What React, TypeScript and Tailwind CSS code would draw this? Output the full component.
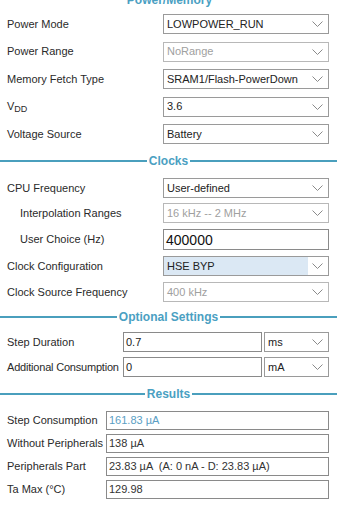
import React from 'react';

const Chevron = () => (
  <svg width="11" height="6" viewBox="0 0 11 6" className="shrink-0">
    <polyline points="0.5,0.5 5.5,5.5 10.5,0.5" fill="none" stroke="#8a8a8a" strokeWidth="1" />
  </svg>
);

const Select = ({ value, disabled = false, highlight = false }: { value: string; disabled?: boolean; highlight?: boolean }) => (
  <div
    className={`flex h-full items-stretch border ${disabled ? 'border-[#b8b8b8] text-[#a0a0a0]' : 'border-[#9a9a9a] text-[#222]'}`}
  >
    <div className={`flex flex-1 items-center whitespace-nowrap pl-[3px] ${highlight ? 'bg-[#dbe8f4]' : 'bg-white'}`}>{value}</div>
    <div className="flex w-[20px] items-center justify-center bg-white pr-[2px]">
      <Chevron />
    </div>
  </div>
);

const Divider = ({ title }: { title: string }) => (
  <div className="flex h-[14px] items-center">
    <div className="h-[2px] flex-1 bg-[#4a9fbd]" />
    <span className="px-[2px] text-[12px] font-bold leading-none text-[#4aa0c2]">{title}</span>
    <div className="mr-[2px] h-[2px] flex-1 bg-[#4a9fbd]" />
  </div>
);

const Row = ({ label, children, indent = false, h = 20, mt = 0 }: { label: React.ReactNode; children: React.ReactNode; indent?: boolean; h?: number; mt?: number }) => (
  <div className="flex items-center" style={{ height: h, marginTop: mt }}>
    <div className={`w-[163px] shrink-0 whitespace-nowrap text-[#2a2a2a] ${indent ? 'pl-[20px]' : 'pl-[7px]'}`}>{label}</div>
    <div className="mr-[10px] h-full flex-1">{children}</div>
  </div>
);

const ResultRow = ({ label, value, blue = false, mt }: { label: string; value: string; blue?: boolean; mt: number }) => (
  <div className="flex h-[19px] items-center" style={{ marginTop: mt }}>
    <div className="w-[106px] shrink-0 whitespace-nowrap pl-[7px] text-[#2a2a2a]">{label}</div>
    <div className={`mr-[10px] flex h-full flex-1 items-center whitespace-pre border border-[#8a8a8a] pl-[2px] ${blue ? 'text-[#5a9ec4]' : 'text-[#333]'}`}>
      {value}
    </div>
  </div>
);

export default function App() {
  return (
    <div className="h-[511px] w-[339px] overflow-hidden bg-white text-[11px] leading-none" style={{ fontFamily: '"Liberation Sans", Arial, sans-serif' }}>
      <div className="-mt-[7px] flex h-[14px] justify-center">
        <span className="text-[12px] font-bold leading-[14px] text-[#4aa0c2]">Power/Memory</span>
      </div>

      <div className="mt-[7px] flex flex-col gap-[7.5px]">
        <Row label="Power Mode"><Select value="LOWPOWER_RUN" /></Row>
        <Row label="Power Range"><Select value="NoRange" disabled /></Row>
        <Row label="Memory Fetch Type"><Select value="SRAM1/Flash-PowerDown" /></Row>
        <Row label={<span>V<sub className="text-[9px]">DD</sub></span>}><Select value="3.6" /></Row>
        <Row label="Voltage Source"><Select value="Battery" /></Row>
      </div>

      <div className="mt-[10px]"><Divider title="Clocks" /></div>

      <Row label="CPU Frequency" mt={10}><Select value="User-defined" /></Row>
      <Row label="Interpolation Ranges" indent mt={5}><Select value="16 kHz -- 2 MHz" disabled /></Row>
      <Row label="User Choice (Hz)" indent h={21} mt={6}>
        <div className="flex h-full items-center border border-[#8a8a8a] pl-[2px] text-[14px] text-[#111]">400000</div>
      </Row>
      <Row label="Clock Configuration" mt={6}><Select value="HSE BYP" highlight /></Row>
      <Row label="Clock Source Frequency" mt={6}><Select value="400 kHz" disabled /></Row>

      <div className="mt-[8px]"><Divider title="Optional Settings" /></div>

      <div className="mt-[8px] flex h-[20px] items-center">
        <div className="w-[123px] shrink-0 whitespace-nowrap pl-[7px] text-[#2a2a2a]">Step Duration</div>
        <div className="flex h-full flex-1 items-center border border-[#8a8a8a] pl-[2px] text-[#222]">0.7</div>
        <div className="ml-[2px] mr-[10px] h-full w-[65px]"><Select value="ms" /></div>
      </div>
      <div className="mt-[5px] flex h-[20px] items-center">
        <div className="w-[123px] shrink-0 whitespace-nowrap pl-[7px] tracking-[-0.2px] text-[#2a2a2a]">Additional Consumption</div>
        <div className="flex h-full flex-1 items-center border border-[#8a8a8a] pl-[2px] text-[#222]">0</div>
        <div className="ml-[2px] mr-[10px] h-full w-[65px]"><Select value="mA" /></div>
      </div>

      <div className="mt-[10px]"><Divider title="Results" /></div>

      <ResultRow label="Step Consumption" value="161.83 µA" blue mt={10} />
      <ResultRow label="Without Peripherals" value="138 µA" mt={4} />
      <ResultRow label="Peripherals Part" value="23.83 µA  (A: 0 nA - D: 23.83 µA)" mt={4} />
      <ResultRow label="Ta Max (°C)" value="129.98" mt={4} />
    </div>
  );
}
